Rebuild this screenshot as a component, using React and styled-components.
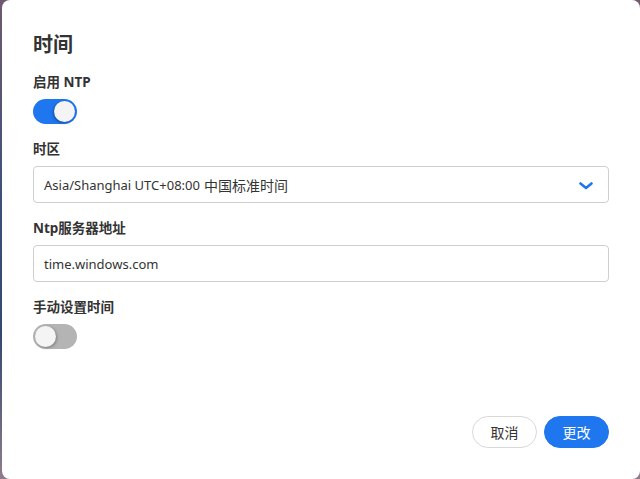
import React, { useState } from "react";
import styled, { createGlobalStyle } from "styled-components";

const GlobalStyle = createGlobalStyle`
  html, body {
    margin: 0;
    padding: 0;
    height: 100%;
  }
  body {
    font-family: "Segoe UI", "Noto Sans", "Noto Sans CJK SC", sans-serif;
    background: linear-gradient(180deg, #6e5a6e 0%, #3b4f7a 45%, #34486f 70%, #8f7c8c 100%);
    overflow: hidden;
  }
`;

const Page = styled.div`
  height: 479px;
  display: flex;
  justify-content: flex-end;
`;

const Dialog = styled.div`
  width: 638px;
  height: 479px;
  box-sizing: border-box;
  background: #fff;
  border-radius: 8px;
  padding: 31px 31px 31px 31px;
  display: flex;
  flex-direction: column;
  color: #333;
`;

const Title = styled.h2`
  margin: 0;
  font-size: 20px;
  line-height: 28px;
  font-weight: 700;
  color: #333;
`;

const Form = styled.div`
  display: flex;
  flex-direction: column;
  gap: 16px;
  margin-top: 14px;
`;

const Field = styled.div`
  display: flex;
  flex-direction: column;
  align-items: flex-start;
  gap: 8px;
`;

const Label = styled.label`
  font-size: 13.5px;
  line-height: 18px;
  font-weight: 700;
  color: #333;
`;

const Track = styled.button`
  position: relative;
  width: 44px;
  height: 25px;
  padding: 0;
  border: none;
  border-radius: 13px;
  background: ${(p) => (p.$on ? "#1f77f0" : "#b4b4b4")};
  cursor: pointer;
`;

const Knob = styled.span`
  position: absolute;
  top: 2px;
  left: ${(p) => (p.$on ? "21px" : "2px")};
  width: 21px;
  height: 21px;
  border-radius: 50%;
  background: #f4f4f4;
  box-shadow: ${(p) =>
    p.$on ? "-1px 1px 3px rgba(0,0,0,0.35)" : "1px 1px 3px rgba(0,0,0,0.3)"};
`;

const Box = styled.div`
  position: relative;
  width: 100%;
  height: 37px;
  box-sizing: border-box;
  border: 1px solid #cfcfcf;
  border-radius: 4px;
  display: flex;
  align-items: center;
  padding: 0 10px;
  font-size: 13px;
  color: #333;
  background: #fff;
`;

const Wide = styled.span`
  font-size: 14px;
  margin-left: 4px;
`;

const Chevron = styled.svg`
  position: absolute;
  right: 15px;
  top: 15px;
`;

const Footer = styled.div`
  margin-top: auto;
  display: flex;
  justify-content: flex-end;
  gap: 7px;
`;

const Button = styled.button`
  width: 65px;
  height: 32px;
  border-radius: 16px;
  font-family: inherit;
  font-size: 14px;
  cursor: pointer;
  border: 1px solid ${(p) => (p.$primary ? "#1f77f0" : "#d9d9d9")};
  background: ${(p) => (p.$primary ? "#1f77f0" : "#fff")};
  color: ${(p) => (p.$primary ? "#fff" : "#333")};
`;

const Toggle = ({ on, onClick }) => (
  <Track $on={on} onClick={onClick}>
    <Knob $on={on} />
  </Track>
);

export default function App() {
  const [ntp, setNtp] = useState(true);
  const [manual, setManual] = useState(false);

  return (
    <Page>
      <GlobalStyle />
      <Dialog>
        <Title>时间</Title>
        <Form>
          <Field>
            <Label>启用 NTP</Label>
            <Toggle on={ntp} onClick={() => setNtp(!ntp)} />
          </Field>
          <Field>
            <Label>时区</Label>
            <Box>
              Asia/Shanghai UTC+08:00<Wide>中国标准时间</Wide>
              <Chevron width="14" height="8" viewBox="0 0 14 8">
                <path
                  d="M1.5 1.5 L7 6 L12.5 1.5"
                  fill="none"
                  stroke="#1f77f0"
                  strokeWidth="2.6"
                  strokeLinecap="round"
                  strokeLinejoin="round"
                />
              </Chevron>
            </Box>
          </Field>
          <Field>
            <Label>Ntp服务器地址</Label>
            <Box>time.windows.com</Box>
          </Field>
          <Field>
            <Label>手动设置时间</Label>
            <Toggle on={manual} onClick={() => setManual(!manual)} />
          </Field>
        </Form>
        <Footer>
          <Button>取消</Button>
          <Button $primary>更改</Button>
        </Footer>
      </Dialog>
    </Page>
  );
}
